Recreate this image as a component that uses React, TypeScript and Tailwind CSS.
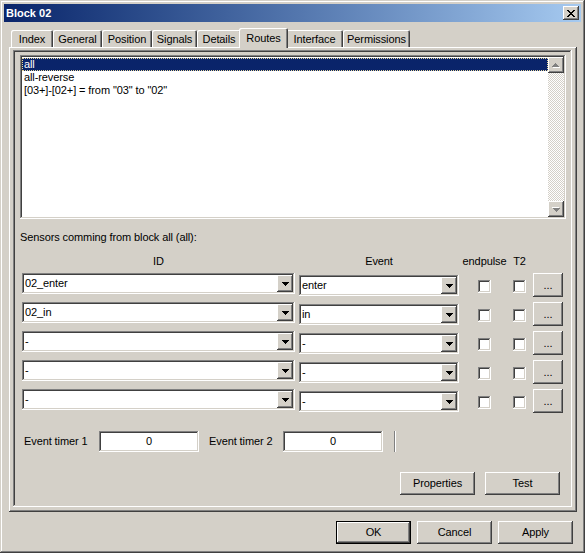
import React from "react";

const RAISED =
  "bg-[#d4d0c8] shadow-[inset_-1px_-1px_#404040,inset_1px_1px_#ffffff,inset_-2px_-2px_#808080,inset_2px_2px_#d4d0c8]";
const SUNKEN =
  "bg-white shadow-[inset_-1px_-1px_#ffffff,inset_1px_1px_#808080,inset_-2px_-2px_#d4d0c8,inset_2px_2px_#404040]";

const tabs = [
  { label: "Index", w: "w-[42px]" },
  { label: "General", w: "w-[49px]" },
  { label: "Position", w: "w-[50px]" },
  { label: "Signals", w: "w-[45px]" },
  { label: "Details", w: "w-[44px]" },
  { label: "Routes", w: "w-[49px]", active: true },
  { label: "Interface", w: "w-[57px]" },
  { label: "Permissions", w: "w-[67px]" },
];

const routes = ["all", "all-reverse", '[03+]-[02+] = from "03" to "02"'];

const sensors = [
  { id: "02_enter", event: "enter" },
  { id: "02_in", event: "in" },
  { id: "-", event: "-" },
  { id: "-", event: "-" },
  { id: "-", event: "-" },
];

const DownArrow = () => (
  <svg width="7" height="4" viewBox="0 0 7 4" shapeRendering="crispEdges">
    <path d="M0 0h7v1H0zM1 1h5v1H1zM2 2h3v1H2zM3 3h1v1H3z" fill="#000" />
  </svg>
);

// greyed-out scroll arrow with the white emboss
const ScrollArrow = ({ up }: { up?: boolean }) => (
  <svg width="8" height="5" viewBox="0 0 8 5" shapeRendering="crispEdges" className={up ? "" : "rotate-180"}>
    <path d="M4 1h1v1H4zM3 2h3v1H3zM2 3h5v1H2zM1 4h7v1H1z" fill="#fff" />
    <path d="M3 0h1v1H3zM2 1h3v1H2zM1 2h5v1H1zM0 3h7v1H0z" fill="#808080" />
  </svg>
);

const Combo = ({ value, w, className = "" }: { value: string; w: string; className?: string }) => (
  <div className={`${SUNKEN} ${w} h-[21px] p-[2px] flex ${className}`}>
    <div className="flex-1 flex items-center pl-[1px] leading-[13px]">{value}</div>
    <div className={`${RAISED} w-[16px] h-full flex items-center justify-center`}>
      <DownArrow />
    </div>
  </div>
);

const Checkbox = () => <div className={`${SUNKEN} w-[13px] h-[13px] mt-[7px]`} />;

const Button = ({ label, primary }: { label: string; primary?: boolean }) =>
  primary ? (
    <div className="w-[75px] h-[23px] border border-black">
      <div className={`${RAISED} w-full h-full flex items-center justify-center`}>{label}</div>
    </div>
  ) : (
    <div className={`${RAISED} w-[75px] h-[23px] flex items-center justify-center`}>{label}</div>
  );

export default function App() {
  return (
    <div className="w-[585px] h-[553px] bg-[#d4d0c8] p-[4px] flex flex-col text-[11px] leading-[13px] tracking-[-0.1px] text-black font-['Liberation_Sans',Arial,sans-serif] shadow-[inset_-1px_-1px_#404040,inset_1px_1px_#d4d0c8,inset_-2px_-2px_#808080,inset_2px_2px_#ffffff]">
      {/* Title bar */}
      <div className="h-[18px] flex items-center justify-between pl-[2px] pr-[2px] bg-linear-to-r from-[#0a246a] to-[#a6caf0]">
        <span className="text-white font-bold tracking-normal">Block 02</span>
        <div className={`${RAISED} w-[16px] h-[14px] flex items-center justify-center`}>
          <svg width="8" height="7" viewBox="0 0 8 7" shapeRendering="crispEdges">
            <path
              d="M0 0h2v1H0zM6 0h2v1H6zM1 1h2v1H1zM5 1h2v1H5zM2 2h4v1H2zM3 3h2v1H3zM2 4h4v1H2zM1 5h2v1H1zM5 5h2v1H5zM0 6h2v1H0zM6 6h2v1H6z"
              fill="#000"
            />
          </svg>
        </div>
      </div>

      {/* Tabs */}
      <div className="flex items-end h-[19px] mt-[6px] ml-[5px] pl-[2px]">
        {tabs.map((t) =>
          t.active ? (
            <div
              key={t.label}
              className={`${t.w} relative z-10 -mx-[2px] -mb-[1px] h-[20px] flex items-center justify-center rounded-t-[2px] bg-[#d4d0c8] shadow-[inset_1px_1px_#ffffff,inset_-1px_0_#404040,inset_-2px_0_#808080]`}
            >
              {t.label}
            </div>
          ) : (
            <div
              key={t.label}
              className={`${t.w} h-[17px] pt-[2px] flex items-center justify-center rounded-t-[2px] bg-[#d4d0c8] shadow-[inset_1px_1px_#ffffff,inset_-1px_0_#404040,inset_-2px_0_#808080]`}
            >
              {t.label}
            </div>
          )
        )}
      </div>

      {/* Tab panel */}
      <div className="ml-[5px] w-[568px] h-[465px] pl-[4px] pt-[3px] shadow-[inset_-1px_-1px_#404040,inset_1px_1px_#ffffff,inset_-2px_-2px_#808080]">
        <div className="w-[559px] h-[457px] p-[2px] flex flex-col shadow-[inset_-1px_-1px_#ffffff,inset_1px_1px_#808080,inset_-2px_-2px_#d4d0c8,inset_2px_2px_#404040]">
          {/* Routes list */}
          <div className={`${SUNKEN} ml-[5px] mt-[3px] w-[546px] h-[164px] p-[2px] flex`}>
            <div className="flex-1 pt-[1px]">
              {routes.map((r, i) => (
                <div
                  key={r}
                  className={`h-[13px] leading-[11px] pl-[1px] border border-dotted whitespace-nowrap ${
                    i === 0 ? "bg-[#0a246a] text-white border-[#e8d89c]" : "border-transparent"
                  }`}
                >
                  {r}
                </div>
              ))}
            </div>
            <div className="w-[16px] flex flex-col">
              <div className={`${RAISED} h-[16px] flex items-center justify-center`}>
                <ScrollArrow up />
              </div>
              <div className="flex-1 bg-[image:repeating-conic-gradient(#d4d0c8_0%_25%,#ffffff_0%_50%)] bg-[length:2px_2px]" />
              <div className={`${RAISED} h-[16px] flex items-center justify-center`}>
                <ScrollArrow />
              </div>
            </div>
          </div>

          <div className="ml-[5px] mt-[12px]">Sensors comming from block all (all):</div>

          {/* Column headers */}
          <div className="flex mt-[11px] ml-[7px] whitespace-nowrap">
            <div className="w-[273px] flex justify-center">ID</div>
            <div className="w-[160px] ml-[4px] flex justify-center">Event</div>
            <div className="w-[13px] ml-[19px] flex justify-center">endpulse</div>
            <div className="w-[13px] ml-[22px] flex justify-center">T2</div>
          </div>

          {/* Sensor rows */}
          <div className="flex flex-col gap-[5px] mt-[5px] ml-[7px]">
            {sensors.map((s, i) => (
              <div key={i} className="flex items-start h-[24px]">
                <Combo value={s.id} w="w-[273px]" />
                <Combo value={s.event} w="w-[160px]" className="ml-[4px] mt-[2px]" />
                <div className="ml-[19px]">
                  <Checkbox />
                </div>
                <div className="ml-[22px]">
                  <Checkbox />
                </div>
                <div className={`${RAISED} ml-[7px] w-[30px] h-[24px] flex items-center justify-center`}>...</div>
              </div>
            ))}
          </div>

          {/* Event timers */}
          <div className="flex items-center mt-[18px] ml-[9px]">
            <span className="w-[75px]">Event timer 1</span>
            <div className={`${SUNKEN} w-[100px] h-[21px] flex items-center justify-center`}>0</div>
            <span className="ml-[10px] w-[74px]">Event timer 2</span>
            <div className={`${SUNKEN} w-[100px] h-[21px] flex items-center justify-center`}>0</div>
            <div className="ml-[11px] w-[2px] h-[21px] border-l border-r border-l-[#808080] border-r-white" />
          </div>

          <div className="flex justify-end gap-[10px] mt-[20px] mr-[10px]">
            <Button label="Properties" />
            <Button label="Test" />
          </div>
        </div>
      </div>

      {/* Dialog buttons */}
      <div className="flex justify-end gap-[6px] mt-[9px] pr-[8px]">
        <Button label="OK" primary />
        <Button label="Cancel" />
        <Button label="Apply" />
      </div>
    </div>
  );
}
